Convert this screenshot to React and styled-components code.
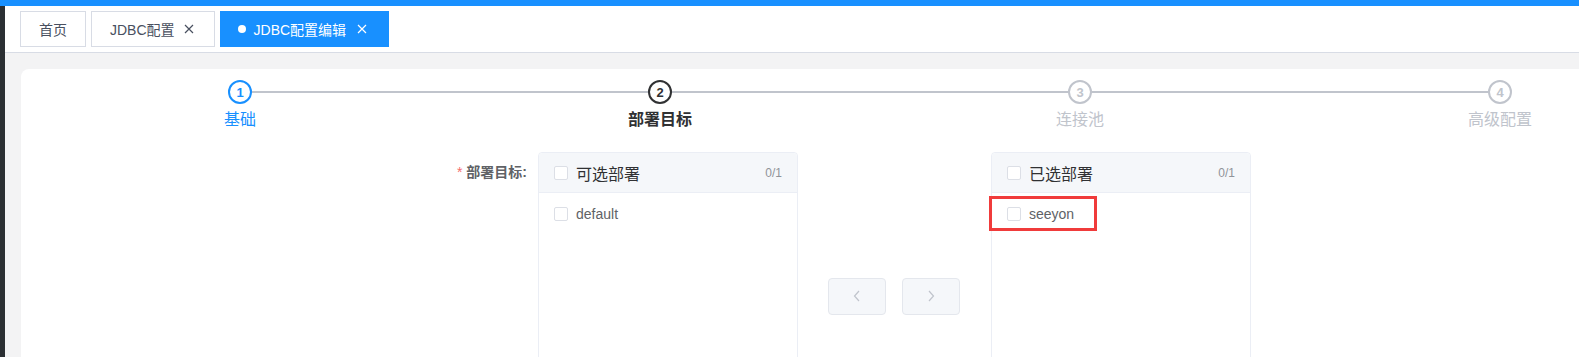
import React from "react";
import styled, { createGlobalStyle } from "styled-components";

const Global = createGlobalStyle`
  html, body { margin: 0; padding: 0; }
  body {
    overflow: hidden;
    background: #f3f3f4;
    font-family: "Liberation Sans", "Noto Sans CJK SC", Arial, sans-serif;
  }
  * { box-sizing: border-box; }
`;

const Page = styled.div`
  width: 1579px;
  height: 357px;
  display: flex;
  flex-direction: column;
  overflow: hidden;
`;

const TopBar = styled.div`
  height: 6px;
  background: #1890ff;
  flex: none;
`;

const Body = styled.div`
  flex: 1;
  display: flex;
  min-height: 0;
`;

const Sidebar = styled.div`
  width: 5px;
  flex: none;
  background: #2b2f33;
`;

const Main = styled.div`
  flex: 1;
  display: flex;
  flex-direction: column;
  min-width: 0;
`;

const TabBar = styled.div`
  height: 47px;
  flex: none;
  background: #fff;
  border-bottom: 1px solid #d8dce5;
  padding: 5px 0 0 15px;
  display: flex;
  align-items: flex-start;
  gap: 5px;
`;

const Tab = styled.div`
  height: 36px;
  display: flex;
  align-items: center;
  padding: ${(p) => (p.$active ? "0 21px 0 17px" : p.$closable ? "0 20px 0 18px" : "0 18px")};
  border: 1px solid ${(p) => (p.$active ? "#1890ff" : "#d8dce5")};
  background: ${(p) => (p.$active ? "#1890ff" : "#fff")};
  color: ${(p) => (p.$active ? "#fff" : "#495060")};
  font-size: 14px;
  white-space: nowrap;
`;

const Dot = styled.span`
  width: 8px;
  height: 8px;
  border-radius: 50%;
  background: #fff;
  margin-right: 8px;
`;

const CloseIcon = styled.svg`
  width: 10px;
  height: 10px;
  margin-left: ${(p) => p.$gap}px;
  flex: none;
`;

const Content = styled.div`
  flex: 1;
  background: #f3f3f4;
  padding: 16px 0 0 16px;
  min-height: 0;
`;

const Card = styled.div`
  width: 1720px;
  height: 400px;
  background: #fff;
  border-radius: 8px;
  padding: 11px 0 0 9px;
`;

const Steps = styled.div`
  width: 1680px;
  display: flex;
`;

const Step = styled.div`
  flex: 1;
  position: relative;
  display: flex;
  flex-direction: column;
  align-items: center;
`;

const StepLine = styled.div`
  position: absolute;
  top: 11px;
  left: 50%;
  right: -50%;
  height: 2px;
  background: #c0c4cc;
`;

const statusColor = {
  finish: "#1890ff",
  process: "#303133",
  wait: "#c0c4cc",
};

const StepIcon = styled.div`
  position: relative;
  z-index: 1;
  width: 24px;
  height: 24px;
  border-radius: 50%;
  border: 2px solid ${(p) => statusColor[p.$status]};
  color: ${(p) => statusColor[p.$status]};
  background: #fff;
  display: flex;
  align-items: center;
  justify-content: center;
  font-size: 13px;
  font-weight: 700;
  line-height: 1;
`;

const StepTitle = styled.div`
  margin-top: 4px;
  line-height: 24px;
  font-size: 16px;
  color: ${(p) => statusColor[p.$status]};
  font-weight: ${(p) => (p.$status === "process" ? 700 : 400)};
`;

const FormRow = styled.div`
  margin-top: 20px;
  display: flex;
  align-items: flex-start;
`;

const Label = styled.label`
  width: 508px;
  flex: none;
  text-align: right;
  padding-right: 11px;
  line-height: 40px;
  font-size: 14px;
  font-weight: 700;
  color: #606266;
`;

const Required = styled.span`
  color: #f56c6c;
  font-weight: 400;
  margin-right: 4px;
`;

const Transfer = styled.div`
  display: flex;
  align-items: center;
`;

const Panel = styled.div`
  position: relative;
  width: 260px;
  height: 288px;
  border: 1px solid #ebeef5;
  border-radius: 4px;
  background: #fff;
`;

const PanelHeader = styled.div`
  height: 40px;
  background: #f5f7fa;
  border-bottom: 1px solid #ebeef5;
  border-radius: 4px 4px 0 0;
  padding: 0 15px;
  display: flex;
  align-items: center;
`;

const Checkbox = styled.span`
  width: 14px;
  height: 14px;
  border: 1px solid #dcdfe6;
  border-radius: 2px;
  background: #fff;
  margin-right: 8px;
  flex: none;
`;

const PanelTitle = styled.span`
  font-size: 16px;
  color: #303133;
`;

const Count = styled.span`
  margin-left: auto;
  font-size: 12px;
  color: #909399;
`;

const List = styled.div`
  padding-top: 6px;
`;

const Item = styled.div`
  height: 30px;
  padding: 0 15px;
  display: flex;
  align-items: center;
  font-size: 14px;
  color: #606266;
`;

const Buttons = styled.div`
  display: flex;
  gap: 16px;
  padding: 0 31px 0 30px;
`;

const ArrowButton = styled.button`
  width: 58px;
  height: 37px;
  border: 1px solid #e4e7ed;
  border-radius: 4px;
  background: #f5f7fa;
  color: #c0c4cc;
  display: flex;
  align-items: center;
  justify-content: center;
  padding: 0;
  cursor: not-allowed;
`;

const Highlight = styled.div`
  position: absolute;
  left: -3px;
  top: 43px;
  width: 108px;
  height: 35px;
  border: 3px solid #f03b3b;
  pointer-events: none;
`;

const Close = ({ color, gap }) => (
  <CloseIcon viewBox="0 0 10 10" $gap={gap}>
    <path d="M1 1 L9 9 M9 1 L1 9" stroke={color} strokeWidth="1.2" fill="none" />
  </CloseIcon>
);

const Chevron = ({ dir }) => (
  <svg width="8" height="12" viewBox="0 0 8 12">
    <path
      d={dir === "left" ? "M6 1 L1.5 6 L6 11" : "M2 1 L6.5 6 L2 11"}
      stroke="currentColor"
      strokeWidth="1.2"
      fill="none"
    />
  </svg>
);

const steps = [
  { n: 1, title: "基础", status: "finish" },
  { n: 2, title: "部署目标", status: "process" },
  { n: 3, title: "连接池", status: "wait" },
  { n: 4, title: "高级配置", status: "wait" },
];

export default function App() {
  return (
    <>
      <Global />
      <Page>
        <TopBar />
        <Body>
          <Sidebar />
          <Main>
            <TabBar>
              <Tab>首页</Tab>
              <Tab $closable>
                JDBC配置
                <Close color="#495060" gap={9} />
              </Tab>
              <Tab $active>
                <Dot />
                JDBC配置编辑
                <Close color="#fff" gap={11} />
              </Tab>
            </TabBar>
            <Content>
              <Card>
                <Steps>
                  {steps.map((s, i) => (
                    <Step key={s.n}>
                      {i < steps.length - 1 && <StepLine />}
                      <StepIcon $status={s.status}>{s.n}</StepIcon>
                      <StepTitle $status={s.status}>{s.title}</StepTitle>
                    </Step>
                  ))}
                </Steps>
                <FormRow>
                  <Label>
                    <Required>*</Required>部署目标:
                  </Label>
                  <Transfer>
                    <Panel>
                      <PanelHeader>
                        <Checkbox />
                        <PanelTitle>可选部署</PanelTitle>
                        <Count>0/1</Count>
                      </PanelHeader>
                      <List>
                        <Item>
                          <Checkbox />
                          default
                        </Item>
                      </List>
                    </Panel>
                    <Buttons>
                      <ArrowButton disabled>
                        <Chevron dir="left" />
                      </ArrowButton>
                      <ArrowButton disabled>
                        <Chevron dir="right" />
                      </ArrowButton>
                    </Buttons>
                    <Panel>
                      <PanelHeader>
                        <Checkbox />
                        <PanelTitle>已选部署</PanelTitle>
                        <Count>0/1</Count>
                      </PanelHeader>
                      <List>
                        <Item>
                          <Checkbox />
                          seeyon
                        </Item>
                      </List>
                      <Highlight />
                    </Panel>
                  </Transfer>
                </FormRow>
              </Card>
            </Content>
          </Main>
        </Body>
      </Page>
    </>
  );
}
